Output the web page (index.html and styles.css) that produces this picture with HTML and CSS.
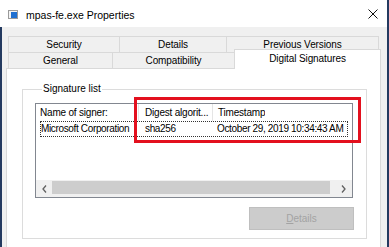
FILE: index.html
```html
<html>
	<head>
		<link rel="stylesheet" href="styles.css">
	</head>
	<body>
		<div class="window">
			<div class="titlebar">
				<svg class="app-icon" width="10" height="9" viewBox="0 0 10 9">
					<rect x="0.5" y="0.5" width="9" height="8" fill="#f4f4f4" stroke="#9a9a9a"/>
					<rect x="3" y="2" width="6" height="6" fill="#1f6fd0"/>
				</svg>
				<span class="title">mpas-fe.exe Properties</span>
				<svg class="close" width="10" height="10" viewBox="0 0 10 10">
					<path d="M0.5 0.5 L9.5 9.5 M9.5 0.5 L0.5 9.5" stroke="#111" stroke-width="1"/>
				</svg>
			</div>

			<div class="client">
				<div class="tabs">
					<div class="tab-row">
						<div class="tab t-security">Security</div>
						<div class="tab t-details">Details</div>
						<div class="tab t-versions last">Previous Versions</div>
					</div>
					<div class="tab-row front">
						<div class="tab t-general">General</div>
						<div class="tab t-compat">Compatibility</div>
						<div class="tab t-digital selected">Digital Signatures</div>
					</div>
				</div>

				<div class="panel">
					<fieldset class="group">
						<legend>Signature list</legend>
						<div class="listview">
							<div class="lv-header">
								<div class="hcol h1">Name of signer:</div>
								<div class="hcol h2">Digest algorit...</div>
								<div class="hcol h3">Timestamp</div>
							</div>
							<div class="lv-row">
								<span class="cell c1">Microsoft Corporation</span>
								<span class="cell c2">sha256</span>
								<span class="cell c3">October 29, 2019 10:34:43 AM</span>
							</div>
							<div class="lv-fill"></div>
							<div class="hscroll">
								<div class="sb-btn">
									<svg width="5" height="8" viewBox="0 0 5 8"><path d="M4 0.5 L1 4 L4 7.5" fill="none" stroke="#606060" stroke-width="1.3"/></svg>
								</div>
								<div class="sb-thumb"></div>
								<div class="sb-track"></div>
								<div class="sb-btn">
									<svg width="5" height="8" viewBox="0 0 5 8"><path d="M1 0.5 L4 4 L1 7.5" fill="none" stroke="#606060" stroke-width="1.3"/></svg>
								</div>
							</div>
						</div>
						<div class="actions">
							<button class="btn" disabled><u>D</u>etails</button>
						</div>
					</fieldset>
				</div>
			</div>

			<div class="highlight"></div>
		</div>
	</body>
</html>
```

FILE: styles.css
```css
body {
	margin: 0;
	background: #f0f0f0;
}

.window {
	position: relative;
	width: 389px;
	height: 247px;
	box-sizing: border-box;
	border-right: 2px solid #243a60;
	display: flex;
	flex-direction: column;
	overflow: hidden;
	font-family: "Liberation Sans", Arial, sans-serif;
	font-size: 10px;
	color: #000;
}

.titlebar {
	height: 27px;
	flex: none;
	background: #fff;
	display: flex;
	align-items: center;
	padding: 2px 0 0 8px;
	box-sizing: border-box;
}

.app-icon {
	flex: none;
}

.title {
	margin-left: 8px;
	font-size: 10.5px;
	color: #000;
}

.close {
	margin-left: auto;
	margin-right: 9px;
	margin-top: -2px;
}

.client {
	flex: 1;
	display: flex;
	flex-direction: column;
	background: #f0f0f0;
	border-left: 2px solid #243a60;
	padding: 9px 6px 0 4px;
	min-height: 0;
}

.tab-row {
	display: flex;
	margin-left: 2px;
	height: 16px;
	align-items: flex-end;
}

.tab {
	flex: none;
	height: 16px;
	box-sizing: border-box;
	border-top: 1px solid #d9d9d9;
	border-left: 1px solid #d9d9d9;
	background: #f0f0f0;
	text-align: center;
	line-height: 15px;
	white-space: nowrap;
	letter-spacing: -0.1px;
}

.tab.last {
	border-right: 1px solid #d9d9d9;
}

.t-security { width: 111px; }
.t-details { width: 107px; }
.t-versions { width: 153px; }
.t-general { width: 104px; }
.t-compat { width: 122px; }
.t-digital { width: 147px; }

.tab.selected {
	position: relative;
	z-index: 1;
	height: 20px;
	margin-bottom: -1px;
	background: #fff;
	border-right: 1px solid #d9d9d9;
	padding-top: 1px;
}

.panel {
	flex: 1;
	background: #fff;
	border: 1px solid #d9d9d9;
	border-bottom: none;
	padding: 14px 0 0 15px;
}

.group {
	margin: 0;
	width: 345px;
	box-sizing: border-box;
	min-width: 0;
	border: 1px solid #dcdcdc;
	padding: 0 12px 8px 12px;
}

.group legend {
	margin-left: 7px;
	padding: 0 1px;
	line-height: 12px;
}

.listview {
	margin-top: 8px;
	width: 318px;
	height: 95px;
	box-sizing: border-box;
	border: 1px solid #828790;
	display: flex;
	flex-direction: column;
	letter-spacing: -0.2px;
}

.lv-header {
	display: flex;
	height: 17px;
	line-height: 17px;
	flex: none;
}

.hcol {
	flex: none;
	white-space: nowrap;
	overflow: hidden;
}

.h1 {
	width: 103px;
	box-sizing: border-box;
	padding-left: 4px;
	border-right: 1px solid #e5e5e5;
}

.h2 {
	width: 74px;
	box-sizing: border-box;
	padding-left: 6px;
	border-right: 1px solid #e5e5e5;
}

.h3 {
	padding-left: 5px;
}

.lv-row {
	display: flex;
	margin-left: 4px;
	width: 308px;
	height: 16px;
	box-sizing: border-box;
	border: 1px dotted #333;
	line-height: 14px;
	flex: none;
	letter-spacing: -0.35px;
}

.cell {
	flex: none;
	white-space: nowrap;
}

.c1 { width: 104px; }
.c2 { width: 72px; }

.lv-fill {
	flex: 1;
}

.hscroll {
	height: 17px;
	flex: none;
	display: flex;
	background: #f0f0f0;
}

.sb-btn {
	width: 16px;
	display: flex;
	align-items: center;
	justify-content: center;
}

.sb-btn:last-child {
	width: 17px;
}

.sb-thumb {
	width: 278px;
	height: 13px;
	margin-top: 1px;
	background: #cdcdcd;
}

.sb-track {
	flex: 1;
}

.actions {
	display: flex;
	justify-content: flex-end;
	margin-top: 9px;
}

.btn {
	width: 105px;
	height: 23px;
	margin: 0;
	padding: 0;
	background: #cccccc;
	border: 1px solid #bfbfbf;
	color: #a3a3a3;
	font-family: "Liberation Sans", Arial, sans-serif;
	font-size: 10px;
}

.highlight {
	position: absolute;
	left: 134px;
	top: 97px;
	width: 227px;
	height: 46px;
	box-sizing: border-box;
	border: 3px solid #e3101e;
}
```
